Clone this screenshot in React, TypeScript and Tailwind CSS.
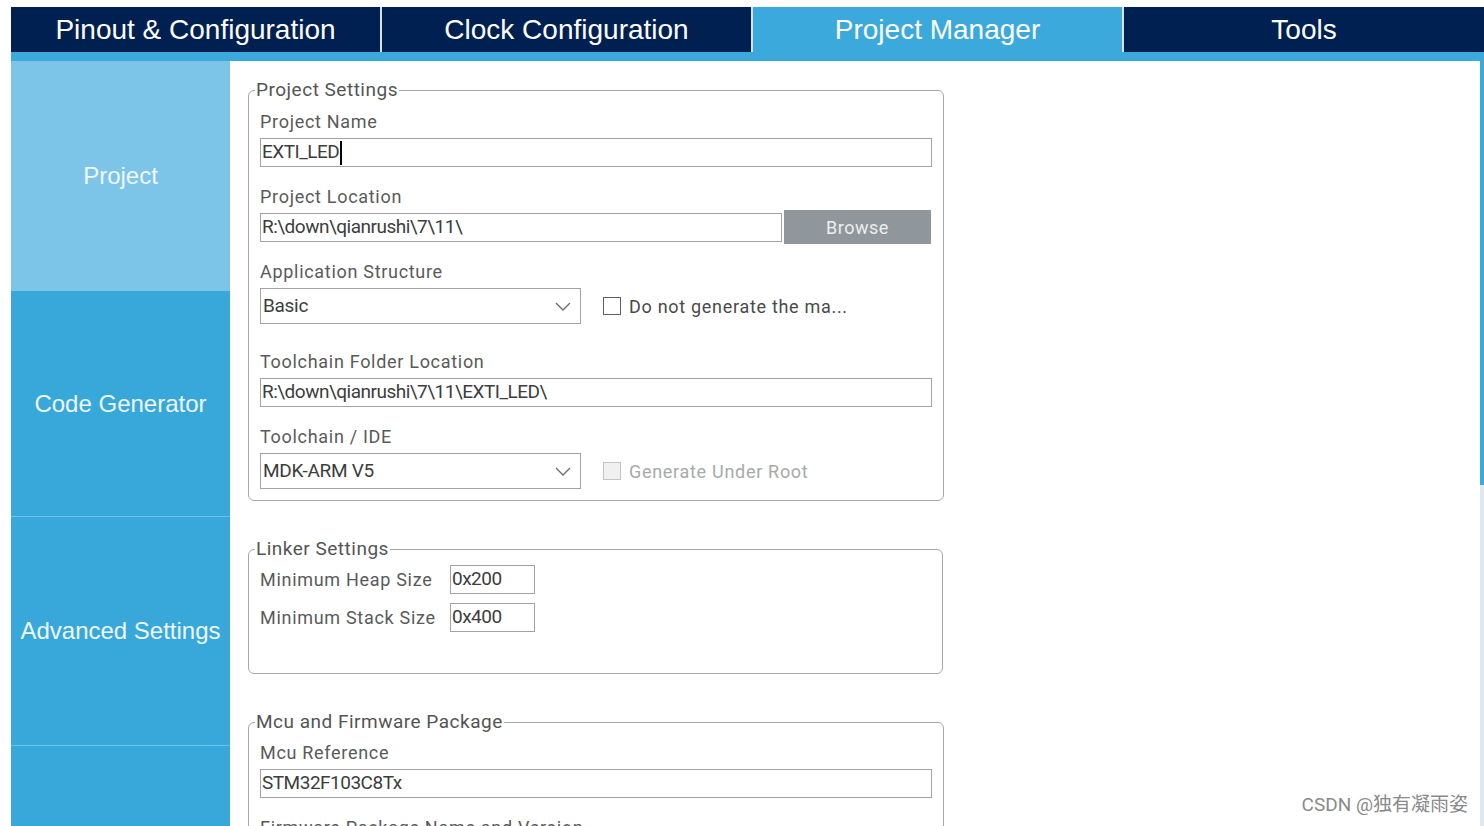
import React from 'react';

const TABS = ['Pinout & Configuration', 'Clock Configuration', 'Project Manager', 'Tools'];
const SIDE = [
  { label: 'Project', h: 'h-[230px] bg-[#7dc5e8]' },
  { label: 'Code Generator', h: 'h-[226px] bg-[#38a8da] border-b border-[#6fc1e8]' },
  { label: 'Advanced Settings', h: 'h-[229px] bg-[#38a8da] border-b border-[#6fc1e8]' },
  { label: '', h: 'h-[229px] bg-[#38a8da]' },
];

const formFont = { fontFamily: 'Roboto, "Liberation Sans", sans-serif' };

function Chevron() {
  return (
    <svg width="16" height="9" viewBox="0 0 16 9" fill="none">
      <polyline points="1,1 8,8 15,1" stroke="#6b6b6b" strokeWidth="1.3" />
    </svg>
  );
}

function Label({ children }: { children: React.ReactNode }) {
  return <div className="text-[18px] leading-[22px] text-[#5a5a5a] tracking-[0.7px]">{children}</div>;
}

function Field({ value, className = '', cursor = false }: { value: string; className?: string; cursor?: boolean }) {
  return (
    <div className={`h-[29px] border border-[#a3a3a3] bg-white flex items-center px-[1px] text-[19px] text-[#3d3d3d] tracking-[-0.5px] whitespace-nowrap ${className}`}>
      {value}
      {cursor && <span className="inline-block w-[1.5px] h-[24px] bg-black ml-[1px]" />}
    </div>
  );
}

function Select({ value }: { value: string }) {
  return (
    <div className="w-[321px] h-[36px] border border-[#a3a3a3] bg-white flex items-center justify-between pl-[2px] pr-[9px] text-[19px] text-[#3d3d3d] tracking-[-0.3px]">
      <span>{value}</span>
      <Chevron />
    </div>
  );
}

function Check({ label, disabled = false }: { label: string; disabled?: boolean }) {
  return (
    <div className="ml-[22px] flex items-center gap-[8px]">
      <span
        className={`w-[18px] h-[18px] border ${disabled ? 'border-[#c4c4c4] bg-[#f0f0f0]' : 'border-[#5f5f5f] bg-white'}`}
      />
      <span className={`text-[18px] tracking-[0.7px] ${disabled ? 'text-[#a9a9a9]' : 'text-[#4a4a4a]'}`}>{label}</span>
    </div>
  );
}

function Group({ title, className = '', children }: { title: string; className?: string; children: React.ReactNode }) {
  return (
    <fieldset className={`w-[695px] border border-[#a8a8a8] rounded-[6px] px-[11px] ${className}`}>
      <legend className="ml-[-5px] px-[1px] text-[19px] leading-[22px] text-[#555] tracking-[0.5px]">{title}</legend>
      {children}
    </fieldset>
  );
}

export default function App() {
  return (
    <div className="relative w-[1484px] h-[826px] overflow-hidden bg-white pl-[11px] pt-[7px]">
      {/* Top tabs */}
      <div className="flex h-[45px]" style={{ fontFamily: '"Liberation Sans", Arial, sans-serif' }}>
        {TABS.map((t, i) => (
          <div
            key={t}
            className={`flex items-center justify-center text-[28px] text-white ${
              i === 3 ? 'flex-1' : 'w-[371px] border-r-2 border-[#d8e2ee]'
            } ${i === 2 ? 'bg-[#3ca9dc]' : 'bg-[#002052]'}`}
          >
            {t}
          </div>
        ))}
      </div>
      <div className="h-[9px] bg-[#3ca9dc]" />

      <div className="flex h-[765px]">
        {/* Sidebar */}
        <div className="w-[219px] flex flex-col" style={{ fontFamily: '"Liberation Sans", Arial, sans-serif' }}>
          {SIDE.map((s, i) => (
            <div
              key={i}
              className={`${s.h} shrink-0 flex items-center justify-center text-[24px] text-[#eef7fc]`}
            >
              {s.label}
            </div>
          ))}
        </div>

        {/* Main panel */}
        <div className="flex-1 bg-white pl-[18px] pt-[18px]" style={formFont}>
          <Group title="Project Settings" className="pb-[11px]">
            <div className="mt-[10px]"><Label>Project Name</Label></div>
            <Field value="EXTI_LED" cursor className="mt-[5px] w-[672px]" />

            <div className="mt-[19px]"><Label>Project Location</Label></div>
            <div className="mt-[2px] h-[34px] flex items-center">
              <Field value="R:\down\qianrushi\7\11\" className="w-[522px]" />
              <div className="ml-[2px] w-[147px] h-[34px] bg-[#8f979c] flex items-center justify-center text-[18px] text-[#eceeef] tracking-[0.5px]">
                Browse
              </div>
            </div>

            <div className="mt-[17px]"><Label>Application Structure</Label></div>
            <div className="mt-[5px] flex items-center">
              <Select value="Basic" />
              <Check label="Do not generate the ma..." />
            </div>

            <div className="mt-[27px]"><Label>Toolchain Folder Location</Label></div>
            <Field value="R:\down\qianrushi\7\11\EXTI_LED\" className="mt-[5px] w-[672px]" />

            <div className="mt-[19px]"><Label>Toolchain / IDE</Label></div>
            <div className="mt-[5px] flex items-center">
              <Select value="MDK-ARM V5" />
              <Check label="Generate Under Root" disabled />
            </div>
          </Group>

          <Group title="Linker Settings" className="mt-[37px] pb-[41px]">
            <div className="mt-[5px] flex items-center">
              <div className="w-[190px]"><Label>Minimum Heap Size</Label></div>
              <Field value="0x200" className="w-[85px]" />
            </div>
            <div className="mt-[9px] flex items-center">
              <div className="w-[190px]"><Label>Minimum Stack Size</Label></div>
              <Field value="0x400" className="w-[85px]" />
            </div>
          </Group>

          <Group title="Mcu and Firmware Package" className="mt-[37px] pb-[11px]">
            <div className="mt-[9px]"><Label>Mcu Reference</Label></div>
            <Field value="STM32F103C8Tx" className="mt-[5px] w-[672px]" />
            <div className="mt-[19px]"><Label>Firmware Package Name and Version</Label></div>
            <Field value="STM32Cube FW_F1 V1.8.4" className="mt-[5px] w-[672px]" />
          </Group>
        </div>

        {/* Right edge */}
        <div className="w-[4px] flex flex-col">
          <div className="h-[424px] bg-[#3ca9dc]" />
          <div className="flex-1 bg-[#dce9f3]" />
        </div>
      </div>

      <div
        className="absolute right-[16px] bottom-[7px] text-[19px] text-[#8a8a8a]"
        style={{ fontFamily: 'Roboto, "Noto Sans CJK SC", sans-serif' }}
      >
        CSDN @独有凝雨姿
      </div>
    </div>
  );
}
